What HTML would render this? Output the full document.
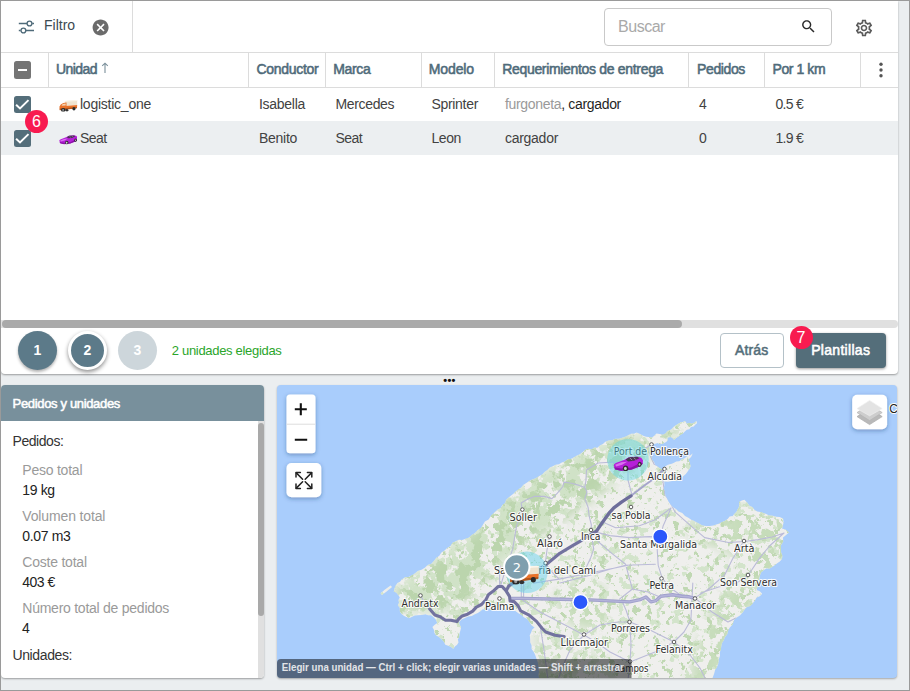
<!DOCTYPE html>
<html lang="es"><head><meta charset="utf-8"><title>Unidades</title>
<style>
*{box-sizing:border-box;margin:0;padding:0}
html,body{width:910px;height:691px;overflow:hidden}
body{position:relative;background:#ebeef0;font-family:"Liberation Sans",sans-serif;font-size:14px;color:#424242}
.abs{position:absolute}
#frame{position:absolute;left:0;top:0;width:910px;height:691px;border:1px solid #9a9a9a;border-top-width:1px;pointer-events:none;z-index:50}
#top{position:absolute;left:1px;top:1px;width:896.5px;height:373px;background:#fff;border-radius:0 0 4px 4px;box-shadow:0 1px 2px rgba(0,0,0,.35)}
.t{position:absolute;white-space:nowrap;line-height:16px;transform-origin:0 50%}
.h{color:#4f6b7a;-webkit-text-stroke:0.55px currentColor}
.vl{position:absolute;width:1px;background:#dcdcdc}
.hl{position:absolute;height:1px;background:#dcdcdc}
.cb{position:absolute;width:17px;height:17px;border-radius:2.5px;background:#546e7a}
.badge{position:absolute;width:23px;height:23px;border-radius:50%;background:#f81b50;color:#fff;font-size:16px;line-height:23.5px;text-align:center}
.step{position:absolute;border-radius:50%;background:#5c7a89;color:#fff;font-weight:bold;font-size:14px;text-align:center}
</style></head><body>
<svg width="0" height="0" style="position:absolute"><defs>
<symbol id="icar" viewBox="0 0 30 15"><path d="M0.5 9.2C0.6 7.6 3 6.6 6 5.6L12 3.2L16 0.9L24 0.3L28 1.5L29.8 4L29.5 7.6L27 10L18 13.6L8 14.6L2 13.2Z" fill="#b51fd8"/><path d="M0.8 11L8 12.4L18 11.4L28 6.4L29.6 7.4L27 10L18 13.6L8 14.6L2 13.2Z" fill="#8912a6"/><path d="M12.3 3.4L16 1.1L24 0.6L26.2 2L21 4.6L15 5.2Z" fill="#4b3654"/><path d="M16.4 1.6L19 3.9M20.5 1.2L22.5 3.4" stroke="#b9a5c2" stroke-width=".7" fill="none"/><path d="M2 8.6L8 6.1L14 5.6L9 8.6L3 10.2Z" fill="#d873ee"/><ellipse cx="12.4" cy="12.1" rx="2.7" ry="2.9" fill="#2e2e2e"/><ellipse cx="12.2" cy="12.2" rx="1.4" ry="1.6" fill="#cfcfcf"/><ellipse cx="26.4" cy="8.1" rx="1.9" ry="2.5" fill="#2e2e2e"/><ellipse cx="26.3" cy="8.2" rx=".9" ry="1.2" fill="#c4c4c4"/></symbol>
<symbol id="itruck" viewBox="0 0 19 12"><path d="M6 0.9L18.6 0L18.6 5.2L6 6.2Z" fill="#efe4d0"/><path d="M6 0.9L18.6 0L18.6 1L6 1.9Z" fill="#fbf5ea"/><path d="M6 6.1L18.6 5.1L18.3 8.2L6 9.6Z" fill="#e9732a"/><path d="M0.4 6.8L1.8 4.6L4.4 3L7.6 2.6L7.6 9.8L0.8 10.2Z" fill="#e9732a"/><path d="M2.6 5.9L3.4 4.4L5 3.7L6.8 3.5L6.8 5.5Z" fill="#f6d3b0"/><path d="M0.6 8.6L7.6 8.2L18.3 7.2L18.2 8.4L6 10L0.8 10.4Z" fill="#b4551a"/><ellipse cx="4.3" cy="10.1" rx="2.3" ry="1.9" fill="#2a2a2a"/><ellipse cx="4.2" cy="10.1" rx="1" ry=".9" fill="#9a9a9a"/><ellipse cx="15.2" cy="8.9" rx="1.6" ry="1.7" fill="#2a2a2a"/><ellipse cx="8" cy="10.4" rx="1.5" ry="1.3" fill="#333"/></symbol>
</defs></svg>
<div id="top">
  <!-- toolbar -->
  <svg class="abs" style="left:17px;top:18.3px" width="17" height="16" viewBox="0 0 17 16"><g fill="none" stroke="#4f6b7a" stroke-width="1.35"><path d="M0.8 4.5H9M14.2 4.5H16M0.8 11.5H2.6M8 11.5H16"/><circle cx="11.5" cy="4.5" r="2.4"/><circle cx="5.4" cy="11.5" r="2.4"/></g></svg>
  <div class="t" style="left:43px;top:16px;color:#3c4a52">Filtro</div>
  <svg class="abs" style="left:90px;top:16.9px" width="19.2" height="19.2" viewBox="0 0 24 24"><circle cx="12" cy="12" r="8" fill="#fff"/><path fill="#6b6b6b" d="M12 2C6.47 2 2 6.47 2 12s4.470 10 10 10 10-4.470 10-10S17.530 2 12 2zm5 13.590L15.590 17 12 13.410 8.410 17 7 15.590 10.590 12 7 8.410 8.410 7 12 10.590 15.590 7 17 8.410 13.410 12 17 15.590z"/></svg>
  <div class="vl" style="left:131px;top:0;height:51px"></div>
  <div class="abs" style="left:603px;top:7px;width:228px;height:38px;border:1px solid #c9c9c9;border-radius:4px"></div>
  <div class="t" id="bus" style="left:617.0px;top:17px;font-size:16px;line-height:18px;color:#a9a9a9;letter-spacing:-0.47px">Buscar</div>
  <svg class="abs" style="left:799.2px;top:17.4px" width="17" height="17" viewBox="0 0 24 24"><path fill="#2a2a2a" d="M15.5 14h-.79l-.28-.27C15.41 12.59 16 11.11 16 9.5 16 5.91 13.09 3 9.5 3S3 5.91 3 9.5 5.91 16 9.5 16c1.61 0 3.09-.59 4.23-1.57l.27.28v.79l5 4.99L20.49 19l-4.99-5zm-6 0C7.01 14 5 11.99 5 9.5S7.01 5 9.5 5 14 7.01 14 9.5 11.99 14 9.5 14z"/></svg>
  <svg class="abs" style="left:853.4px;top:16.5px" width="20" height="20" viewBox="0 0 24 24"><path fill="#5a5a5a" d="M19.43 12.98c.04-.32.07-.64.07-.98 0-.34-.03-.66-.07-.98l2.11-1.65c.19-.15.24-.42.12-.64l-2-3.46c-.09-.16-.26-.25-.44-.25-.06 0-.12.01-.17.03l-2.49 1c-.52-.4-1.08-.73-1.69-.98l-.38-2.65C14.46 2.18 14.25 2 14 2h-4c-.25 0-.46.18-.49.42l-.38 2.65c-.61.25-1.17.59-1.69.98l-2.49-1c-.06-.02-.12-.03-.18-.03-.17 0-.34.09-.43.25l-2 3.46c-.13.22-.07.49.12.64l2.11 1.65c-.04.32-.07.65-.07.98 0 .33.03.66.07.98l-2.11 1.65c-.19.15-.24.42-.12.64l2 3.46c.09.16.26.25.44.25.06 0 .12-.01.17-.03l2.49-1c.52.4 1.08.73 1.69.98l.38 2.65c.03.24.24.42.49.42h4c.25 0 .46-.18.49-.42l.38-2.65c.61-.25 1.17-.59 1.69-.98l2.49 1c.06.02.12.03.18.03.17 0 .34-.09.43-.25l2-3.46c.12-.22.07-.49-.12-.64l-2.11-1.65zm-1.98-1.71c.04.31.05.52.05.73 0 .21-.02.43-.05.73l-.14 1.13.89.7 1.08.84-.7 1.21-1.27-.51-1.04-.42-.9.68c-.43.32-.84.56-1.25.73l-1.06.43-.16 1.13-.2 1.35h-1.4l-.19-1.35-.16-1.13-1.06-.43c-.43-.18-.83-.41-1.23-.71l-.91-.7-1.06.43-1.27.51-.7-1.21 1.08-.84.89-.7-.14-1.13c-.03-.31-.05-.54-.05-.74s.02-.43.05-.73l.14-1.13-.89-.7-1.08-.84.7-1.21 1.27.51 1.04.42.9-.68c.43-.32.84-.56 1.25-.73l1.06-.43.16-1.13.2-1.35h1.39l.19 1.35.16 1.13 1.06.43c.43.18.83.41 1.23.71l.91.7 1.06-.43 1.27-.51.7 1.21-1.07.85-.89.7.14 1.13zM12 8c-2.21 0-4 1.79-4 4s1.79 4 4 4 4-1.79 4-4-1.79-4-4-4zm0 6c-1.1 0-2-.9-2-2s.9-2 2-2 2 .9 2 2-.9 2-2 2z"/></svg>
  <div class="hl" style="left:0;top:51px;width:897px"></div>
  <!-- table header -->
  <div class="abs" style="left:13px;top:60px;width:17px;height:18px;border-radius:2.5px;background:#757575"></div>
  <div class="abs" style="left:17px;top:68px;width:9px;height:2px;background:#fff"></div>
  <div class="vl" style="left:47px;top:51px;height:35px"></div>
  <div class="vl" style="left:247px;top:51px;height:35px"></div>
  <div class="vl" style="left:324px;top:51px;height:35px"></div>
  <div class="vl" style="left:420px;top:51px;height:35px"></div>
  <div class="vl" style="left:493px;top:51px;height:35px"></div>
  <div class="vl" style="left:687px;top:51px;height:35px"></div>
  <div class="vl" style="left:763px;top:51px;height:35px"></div>
  <div class="vl" style="left:859px;top:51px;height:35px"></div>
  <div class="hl" style="left:0;top:86px;width:897px"></div>
  <div class="t h" id="h1" style="left:55.0px;top:60px;letter-spacing:-0.56px">Unidad</div>
  <svg class="abs" style="left:100.2px;top:61px" width="8" height="12" viewBox="0 0 8 12"><path d="M4 1.2V11M1.2 3.8L4 1.2L6.8 3.8" fill="none" stroke="#7b909b" stroke-width="1.1"/></svg>
  <div class="t h" id="h2" style="left:255.4px;top:60px;letter-spacing:-0.29px">Conductor</div>
  <div class="t h" id="h3" style="left:332.2px;top:60px;letter-spacing:-0.32px">Marca</div>
  <div class="t h" id="h4" style="left:427.8px;top:60px;letter-spacing:-0.12px">Modelo</div>
  <div class="t h" id="h5" style="left:501.2px;top:60px;letter-spacing:-0.32px">Requerimientos de entrega</div>
  <div class="t h" id="h6" style="left:696.0px;top:60px;letter-spacing:-0.37px">Pedidos</div>
  <div class="t h" id="h7" style="left:771.6px;top:60px;letter-spacing:-0.43px">Por 1 km</div>
  <svg class="abs" style="left:877px;top:60px" width="6" height="18" viewBox="0 0 6 18"><g fill="#555"><circle cx="3" cy="3.2" r="1.7"/><circle cx="3" cy="9" r="1.7"/><circle cx="3" cy="14.8" r="1.7"/></g></svg>
  <!-- rows -->
  <div class="abs" style="left:0;top:120px;width:897px;height:34px;background:#eceff1"></div>
  <div class="cb" style="left:12.8px;top:95.3px"></div>
  <div class="cb" style="left:12.8px;top:129.1px"></div>
  <svg class="abs" style="left:12.8px;top:95.3px" width="17" height="17" viewBox="0 0 17 17"><path d="M2.1 8.7L6 12.4L14.5 4.1" fill="none" stroke="#fff" stroke-width="2"/></svg>
  <svg class="abs" style="left:12.8px;top:129.1px" width="17" height="17" viewBox="0 0 17 17"><path d="M2.1 8.7L6 12.4L14.5 4.1" fill="none" stroke="#fff" stroke-width="2"/></svg>
  <svg class="abs" style="left:58px;top:99px" width="18.7" height="11.8"><use href="#itruck"/></svg>
  <svg class="abs" style="left:57.7px;top:134px" width="18.8" height="9.6"><use href="#icar"/></svg>
  <div class="badge" style="left:24px;top:108.9px">6</div>
  <div class="t" id="r1a" style="left:79.0px;top:95px;letter-spacing:-0.24px">logistic_one</div>
  <div class="t" id="r1b" style="left:258.0px;top:95px;letter-spacing:-0.28px">Isabella</div>
  <div class="t" id="r1c" style="left:334.5px;top:95px;letter-spacing:-0.35px">Mercedes</div>
  <div class="t" id="r1d" style="left:430.4px;top:95px;letter-spacing:-0.30px">Sprinter</div>
  <div class="t" id="r1e" style="left:504.0px;top:95px;letter-spacing:-0.33px"><span style="color:#9a9a9a">furgoneta</span><span style="color:#1f1f1f">, cargador</span></div>
  <div class="t" id="r1f" style="left:698px;top:95px">4</div>
  <div class="t" id="r1g" style="left:774.4px;top:95px;letter-spacing:-0.71px">0.5 €</div>
  <div class="t" id="r2a" style="left:79.0px;top:129px;letter-spacing:-0.58px">Seat</div>
  <div class="t" id="r2b" style="left:258.0px;top:129px;letter-spacing:-0.28px">Benito</div>
  <div class="t" id="r2c" style="left:334.5px;top:129px;letter-spacing:-0.58px">Seat</div>
  <div class="t" id="r2d" style="left:430.4px;top:129px;letter-spacing:-0.39px">Leon</div>
  <div class="t" id="r2e" style="left:504.0px;top:129px;letter-spacing:-0.28px">cargador</div>
  <div class="t" id="r2f" style="left:698px;top:129px">0</div>
  <div class="t" id="r2g" style="left:774.4px;top:129px;letter-spacing:-0.71px">1.9 €</div>
  <!-- hscroll -->
  <div class="abs" style="left:0;top:319px;width:897px;height:8px;background:#e0e0e0;border-radius:0 4px 4px 0"></div>
  <div class="abs" style="left:1px;top:319px;width:680px;height:7.5px;background:#aaa;border-radius:4px"></div>
  <!-- wizard -->
  <div class="step" style="left:17px;top:330px;width:39px;height:39px;line-height:39px;box-shadow:0 2px 3px rgba(0,0,0,.3)">1</div>
  <div class="step" style="left:67px;top:330px;width:39px;height:39px;line-height:33px;border:3px solid #fff;box-shadow:0 2px 4px rgba(0,0,0,.45)">2</div>
  <div class="step" style="left:117px;top:330px;width:39px;height:39px;line-height:39px;background:#cdd6db">3</div>
  <div class="t" id="sel" style="left:170.8px;top:342px;font-size:13px;color:#2aa52a;letter-spacing:-0.31px">2 unidades elegidas</div>
  <div class="abs" style="left:719px;top:332px;width:64px;height:35px;border:1px solid #b4c1c8;border-radius:4px"></div>
  <div class="t h" id="b1" style="left:734.0px;top:341px;color:#546e7a;letter-spacing:0.16px">Atrás</div>
  <div class="abs" style="left:795px;top:332px;width:90px;height:35px;border-radius:4px;background:#546e7a;box-shadow:0 1px 3px rgba(0,0,0,.4)"></div>
  <div class="t h" id="b2" style="left:810.2px;top:341px;color:#fff;letter-spacing:0.30px">Plantillas</div>
  <div class="badge" style="left:788.5px;top:324.5px">7</div>
</div>
<div class="t" style="left:443.3px;top:371.7px;font-size:11px;font-weight:bold;color:#111;letter-spacing:0.25px;text-shadow:0 0 2px #fff">•••</div>
<!-- left panel -->
<div class="abs" id="lp" style="left:1px;top:385px;width:262.6px;height:292.6px;background:#fff;border-radius:4px;box-shadow:0 1px 2px rgba(0,0,0,.35);overflow:hidden">
  <div class="abs" style="left:0;top:0;width:263px;height:36px;background:#78909c"></div>
  <div class="t" id="lph" style="left:11.6px;top:10.6px;font-size:13px;color:#fff;-webkit-text-stroke:0.5px #fff;letter-spacing:-0.34px">Pedidos y unidades</div>
  <div class="abs" style="left:257px;top:36px;width:6px;height:257px;background:#e0e0e0"></div>
  <div class="abs" style="left:257px;top:38px;width:5.8px;height:193px;background:#a9a9a9;border-radius:3px"></div>
  <div class="t" id="l0" style="left:11.5px;top:48px;color:#333;letter-spacing:-0.44px">Pedidos:</div>
  <div class="t g" id="l1" style="left:21.3px;top:77px;color:#9a9a9a;letter-spacing:-0.23px">Peso total</div>
  <div class="t" id="l2" style="left:21.3px;top:97px;color:#222;letter-spacing:-0.35px">19 kg</div>
  <div class="t g" id="l3" style="left:21.3px;top:123px;color:#9a9a9a;letter-spacing:-0.14px">Volumen total</div>
  <div class="t" id="l4" style="left:21.3px;top:143px;color:#222;letter-spacing:-0.33px">0.07 m3</div>
  <div class="t g" id="l5" style="left:21.3px;top:169px;color:#9a9a9a;letter-spacing:-0.22px">Coste total</div>
  <div class="t" id="l6" style="left:21.3px;top:189px;color:#222;letter-spacing:-0.51px">403 €</div>
  <div class="t g" id="l7" style="left:21.3px;top:215px;color:#9a9a9a;letter-spacing:-0.25px">Número total de pedidos</div>
  <div class="t" id="l8" style="left:21px;top:235px;color:#222">4</div>
  <div class="t" id="l9" style="left:11.5px;top:262px;color:#333;letter-spacing:-0.39px">Unidades:</div>
</div>
<!-- map -->
<div class="abs" id="map" style="left:277px;top:385px;width:619.6px;height:292.5px;background:#a9cdfc;border-radius:4px;overflow:hidden;box-shadow:0 1px 2px rgba(0,0,0,.3)">
<svg class="abs" style="left:0;top:0" width="620" height="293" viewBox="277 385 620 293">
<defs><clipPath id="landc"><path d="M393.8 591.4 L394.5 588.3 L395.8 585.5 L397.4 583.1 L400.0 581.8 L401.8 579.6 L404.8 577.6 L408.4 577.0 L411.6 575.6 L414.8 573.4 L417.8 571.0 L421.5 569.7 L424.8 567.7 L427.7 565.0 L431.4 563.7 L433.9 561.0 L436.1 557.9 L439.3 555.8 L441.4 552.6 L444.5 550.4 L447.2 547.9 L450.5 546.1 L452.7 542.8 L456.1 541.0 L459.0 539.8 L462.1 539.9 L465.0 539.0 L468.7 537.7 L471.7 535.1 L475.0 533.0 L477.5 530.2 L480.8 528.3 L482.8 525.0 L484.9 521.5 L488.6 519.5 L490.8 516.1 L493.0 513.8 L495.3 511.7 L497.7 509.6 L500.6 508.2 L502.3 505.3 L505.1 503.1 L506.1 499.8 L508.6 497.4 L511.1 495.5 L513.7 493.6 L515.8 491.2 L518.4 489.4 L521.2 487.5 L523.5 484.8 L526.3 482.9 L529.2 481.1 L532.3 479.6 L535.7 478.2 L538.8 476.2 L542.2 474.6 L544.5 472.0 L547.4 470.0 L549.9 467.5 L552.8 466.2 L555.7 464.7 L559.0 464.2 L561.8 462.5 L564.9 461.6 L567.5 459.6 L570.7 458.9 L573.6 457.6 L576.6 455.7 L579.9 454.2 L582.8 452.0 L585.5 449.7 L588.4 448.8 L591.6 449.6 L594.3 447.5 L597.4 447.7 L599.9 445.6 L602.9 444.1 L605.3 441.8 L608.6 440.4 L612.1 440.3 L615.4 438.7 L619.0 438.8 L622.1 437.8 L625.2 436.7 L628.1 435.2 L631.0 433.8 L634.0 433.8 L636.6 432.5 L640.0 433.9 L643.2 435.8 L646.1 436.7 L649.0 437.1 L652.0 437.5 L654.3 435.7 L656.4 433.6 L659.7 434.1 L663.0 434.7 L665.6 433.3 L667.4 430.9 L671.1 429.4 L674.0 426.5 L677.2 424.5 L680.5 422.6 L682.8 422.1 L684.9 421.0 L687.1 423.7 L689.3 422.9 L691.5 423.7 L694.2 422.7 L696.5 421.0 L697.0 423.2 L695.2 424.7 L693.7 426.5 L691.0 427.1 L689.3 429.2 L686.8 429.8 L684.9 431.4 L682.9 433.4 L680.5 434.7 L678.5 436.5 L676.2 438.0 L674.0 439.7 L672.5 438.1 L670.7 436.9 L667.4 437.5 L667.7 439.9 L666.3 441.9 L664.1 443.1 L661.9 444.1 L659.6 444.1 L657.5 443.0 L654.5 443.9 L651.4 443.5 L651.3 445.8 L649.8 447.4 L649.6 450.7 L650.3 454.0 L651.8 456.6 L652.0 459.5 L654.0 462.0 L655.3 464.9 L657.6 466.4 L659.7 468.2 L661.8 469.2 L664.1 468.8 L665.2 466.4 L667.4 464.9 L669.6 464.3 L671.8 463.8 L674.0 462.8 L676.2 461.6 L679.2 461.2 L681.6 459.5 L684.6 458.3 L687.1 456.2 L690.1 455.4 L692.6 453.4 L691.5 456.2 L690.1 458.1 L688.2 459.5 L689.9 462.7 L690.5 466.6 L689.0 469.4 L687.3 472.1 L685.8 473.9 L684.0 475.4 L682.3 477.0 L681.8 479.2 L678.4 479.0 L675.4 481.0 L672.0 481.0 L668.1 481.8 L664.2 481.4 L664.4 485.0 L663.6 488.6 L664.9 491.8 L665.3 495.2 L667.0 498.5 L668.6 501.8 L670.7 504.7 L673.0 507.3 L676.0 509.1 L678.5 511.6 L682.3 513.1 L685.0 516.0 L688.4 517.8 L691.6 519.9 L694.3 521.0 L696.7 522.5 L699.3 523.7 L702.3 525.6 L705.9 525.9 L709.8 526.0 L713.6 525.4 L716.2 524.5 L718.8 523.7 L721.3 522.6 L724.8 521.0 L727.9 518.8 L729.6 516.5 L732.7 516.0 L734.5 513.8 L736.4 512.0 L737.5 509.7 L738.8 507.2 L739.3 504.6 L739.4 501.8 L741.8 500.6 L744.4 499.8 L747.0 502.6 L749.3 505.7 L752.4 507.1 L754.4 509.8 L757.2 511.6 L760.4 511.9 L763.4 512.9 L766.3 514.1 L769.1 515.6 L772.7 515.8 L776.1 516.8 L779.7 517.1 L783.0 518.6 L783.6 522.0 L783.0 525.3 L782.0 528.5 L785.8 529.8 L788.9 532.4 L786.1 535.1 L783.0 537.4 L783.2 541.5 L781.0 545.2 L781.0 549.2 L781.1 552.5 L782.3 555.7 L782.0 559.1 L779.8 561.4 L777.2 563.3 L774.7 565.2 L772.0 567.0 L769.6 568.6 L766.4 568.4 L764.0 570.0 L761.2 572.2 L759.8 575.5 L759.2 579.2 L758.4 582.8 L757.5 586.4 L756.6 590.0 L759.8 591.2 L762.2 593.7 L759.8 596.2 L756.6 597.5 L754.8 600.7 L752.5 603.6 L750.1 605.9 L746.9 607.1 L744.6 609.6 L742.4 612.7 L739.9 615.5 L736.7 617.5 L734.3 619.5 L733.2 622.4 L732.0 625.3 L729.8 627.4 L728.1 630.6 L727.2 634.3 L724.8 637.2 L723.8 640.2 L722.0 642.9 L721.3 645.9 L720.9 649.1 L719.9 652.3 L720.0 655.8 L718.9 659.0 L718.5 661.7 L718.1 664.4 L716.9 666.9 L715.1 670.0 L714.2 673.5 L713.0 676.8 L712.0 679.3 L712.0 682.0 L540.0 682.0 L539.2 678.5 L538.5 675.1 L539.1 671.4 L538.0 668.0 L538.4 664.9 L537.7 661.9 L536.6 659.0 L535.4 655.5 L533.8 652.1 L531.6 649.1 L531.6 645.6 L530.2 642.3 L530.2 638.7 L529.7 635.3 L531.1 632.5 L532.2 629.6 L534.6 627.4 L531.5 625.2 L529.4 622.1 L527.3 619.1 L524.1 617.5 L521.6 614.9 L518.4 613.2 L515.4 611.1 L511.8 610.6 L508.6 609.2 L505.3 608.4 L502.0 608.3 L498.7 609.2 L494.9 607.9 L490.8 608.2 L488.2 608.8 L485.5 609.4 L482.8 609.2 L480.4 611.3 L477.8 613.0 L474.9 614.2 L471.8 616.0 L468.2 616.6 L465.0 618.1 L461.6 619.5 L459.1 622.1 L459.5 624.8 L461.1 627.0 L460.5 630.3 L459.5 633.5 L459.1 636.9 L457.9 639.4 L458.5 642.4 L457.1 644.8 L454.9 646.6 L453.2 648.8 L450.9 646.8 L448.2 645.7 L445.3 644.8 L443.7 641.6 L441.3 638.9 L439.0 637.0 L436.3 635.4 L434.4 633.0 L433.9 629.8 L432.4 627.0 L434.7 624.8 L437.4 623.1 L435.9 619.8 L433.4 617.1 L431.1 615.3 L428.1 615.3 L425.5 614.2 L421.6 614.9 L417.6 615.2 L414.7 615.4 L412.2 616.8 L409.7 618.1 L406.8 617.3 L404.1 616.1 L401.8 614.2 L399.9 611.5 L399.8 608.0 L397.8 605.3 L399.0 602.8 L398.5 599.9 L399.8 597.4 L398.2 595.0 L396.4 592.8Z"/><path d="M380.6 593.2L385 589.6L390.6 585.6L392 587L386.6 591.4L382 595Z"/></clipPath>
<filter id="nA" x="0" y="0" width="100%" height="100%" color-interpolation-filters="sRGB"><feTurbulence type="fractalNoise" baseFrequency="0.11" numOctaves="4" seed="3"/><feColorMatrix values="0 0 0 0 0.827  0 0 0 0 0.894  0 0 0 0 0.796  0 -22 0 0 8.75"/></filter>
<filter id="nB" x="0" y="0" width="100%" height="100%" color-interpolation-filters="sRGB"><feTurbulence type="fractalNoise" baseFrequency="0.15" numOctaves="4" seed="8"/><feColorMatrix values="0 0 0 0 0.753  0 0 0 0 0.847  0 0 0 0 0.702  0 -24 0 0 9.15"/></filter>
<filter id="nC" x="0" y="0" width="100%" height="100%" color-interpolation-filters="sRGB"><feTurbulence type="fractalNoise" baseFrequency="0.06" numOctaves="4" seed="5"/><feColorMatrix values="0 0 0 0 0.816  0 0 0 0 0.886  0 0 0 0 0.780  0 -22 0 0 11.5"/></filter>
<filter id="nD" x="0" y="0" width="100%" height="100%" color-interpolation-filters="sRGB"><feTurbulence type="fractalNoise" baseFrequency="0.085" numOctaves="4" seed="12"/><feColorMatrix values="0 0 0 0 0.733  0 0 0 0 0.835  0 0 0 0 0.678  0 -24 0 0 11.4"/></filter>
<filter id="bl"><feGaussianBlur stdDeviation="6"/></filter><mask id="mm"><path d="M395.0 590.0 L405.0 578.0 L425.0 566.0 L445.0 548.0 L470.0 534.0 L490.0 514.0 L510.0 495.0 L535.0 477.0 L560.0 462.0 L590.0 448.0 L620.0 438.0 L650.0 434.0 L690.0 422.0 L672.0 438.0 L650.0 452.0 L640.0 466.0 L620.0 478.0 L600.0 494.0 L580.0 508.0 L560.0 522.0 L540.0 536.0 L520.0 550.0 L500.0 565.0 L480.0 585.0 L465.0 605.0 L445.0 612.0 L420.0 612.0 L400.0 610.0Z" fill="#fff" filter="url(#bl)"/></mask>
<mask id="me"><path d="M735.0 505.0 L790.0 515.0 L790.0 560.0 L765.0 592.0 L745.0 615.0 L728.0 650.0 L718.0 682.0 L688.0 682.0 L698.0 645.0 L712.0 612.0 L728.0 588.0 L742.0 562.0 L722.0 548.0 L700.0 538.0 L686.0 522.0 L715.0 528.0Z" fill="#fff" filter="url(#bl)"/><path d="M535.0 625.0 L560.0 640.0 L590.0 650.0 L620.0 668.0 L620.0 682.0 L535.0 682.0Z" fill="#999" filter="url(#bl)"/><path d="M562.0 586.0 L585.0 580.0 L603.0 588.0 L612.0 612.0 L596.0 630.0 L570.0 624.0 L556.0 604.0Z" fill="#fff" filter="url(#bl)"/><path d="M686.0 515.0 L700.0 524.0 L730.0 520.0 L738.0 535.0 L715.0 545.0 L690.0 535.0Z" fill="#ddd" filter="url(#bl)"/></mask>
<filter id="nE" x="0" y="0" width="100%" height="100%" color-interpolation-filters="sRGB"><feTurbulence type="fractalNoise" baseFrequency="0.10" numOctaves="4" seed="21"/><feColorMatrix values="0 0 0 0 0.776  0 0 0 0 0.863  0 0 0 0 0.729  0 -22 0 0 10.5"/></filter>
</defs>
<g clip-path="url(#landc)"><rect x="277" y="385" width="620" height="293" fill="#efefed"/>
<rect x="277" y="385" width="620" height="293" filter="url(#nA)"/>
<rect x="277" y="385" width="620" height="293" filter="url(#nB)"/>
<g mask="url(#mm)"><rect x="277" y="385" width="620" height="293" filter="url(#nC)"/><rect x="277" y="385" width="620" height="293" filter="url(#nD)"/></g>
<g mask="url(#me)"><rect x="277" y="385" width="620" height="293" filter="url(#nE)"/></g>
<g fill="none" stroke-linejoin="round" stroke-linecap="round">
<path d="M500.8 585.0 L505.7 569.2 L512.6 549.4 L516.6 525.7 L522.5 509.9 M632.0 495.0 L628.0 480.0 L628.0 465.0 M628.0 465.0 L640.0 452.0 L651.0 444.5 M651.0 444.5 L650.0 455.0 L654.0 464.0 L664.0 469.0 M664.0 469.0 L663.0 482.0 L665.0 495.0 L669.0 500.0 L675.0 511.9 L692.8 527.7 L704.7 537.6 L728.4 542.5 L744.3 541.5 L758.1 539.6 L772.0 537.0 L784.0 533.0 M671.0 508.0 L663.2 525.7 L657.2 549.4 L658.2 565.3 L662.2 578.1 M594.0 531.6 L609.8 535.6 L629.6 537.6 L649.3 536.6 L660.0 537.0 M598.0 541.5 L611.8 553.4 L625.6 564.3 L629.6 579.1 L632.5 589.0 L619.7 598.9 M560.0 583.0 L590.0 575.2 L609.8 569.2 L625.6 565.3 L655.3 564.3 M533.4 583.1 L559.1 579.1 L598.7 571.2 L628.3 565.3 M662.2 578.1 L669.1 587.0 L679.0 594.0 L694.8 597.9 M694.8 597.9 L708.7 589.0 L724.5 575.2 L732.4 559.3 L742.3 543.5 M700.8 593.0 L718.6 587.0 L736.4 583.1 L748.2 575.2 L760.1 557.4 L770.0 545.5 L784.0 533.0 M601.9 521.8 L615.7 527.7 L639.4 525.7 L655.3 519.8 L671.0 508.0 M590.8 529.7 L593.7 549.4 L590.8 557.4 L585.0 570.0 M692.8 583.1 L690.9 620.0 L684.0 632.0 L674.0 642.0 M694.8 597.9 L712.0 612.0 L728.0 622.0 L736.0 618.0 M674.0 642.0 L655.0 652.0 L640.0 658.0 L630.0 662.0 M674.0 642.0 L690.0 655.0 L700.0 668.0 L706.0 680.0 M630.0 662.0 L610.0 652.0 L596.0 642.0 L584.0 635.0 M630.0 622.0 L631.0 645.0 L630.0 662.0 L628.0 680.0 M630.0 622.0 L626.0 610.0 L622.0 601.0 M630.0 622.0 L650.0 630.0 L674.0 642.0 M584.0 635.0 L600.0 625.0 L618.0 622.0 L630.0 622.0 M522.4 509.6 L521.1 503.0 L526.6 499.7 L534.3 496.4 L544.2 496.4 L551.9 498.6 L557.4 493.1 L562.9 486.5 L564.0 482.1 L571.6 483.2 L579.3 485.4 L584.8 487.6 L585.9 481.0 L586.5 470.0 L598.0 463.0 L614.0 462.0 L628.0 465.0 M584.8 487.6 L587.0 492.0 L584.8 498.6 L588.1 507.4 L589.2 516.2 L591.4 525.0 L590.9 529.9 M584.0 635.0 L570.0 650.0 L562.0 668.0 L558.0 680.0 M540.0 625.0 L544.0 650.0 L548.0 680.0 M549.5 536.5 L547.0 550.0 L545.3 563.3 M545.3 563.3 L552.0 572.0 L559.1 579.1 M521.0 599.0 L540.0 612.0 L565.0 625.0 L584.0 635.0 M420.5 595.5 L425.0 603.0 L429.4 609.2 M521.3 598.0 L521.3 583.0 L522.0 576.0 M523.6 598.0 L523.6 584.0 L526.0 577.0 M499.6 586.0 L499.6 575.3 L500.5 566.0 M632.0 589.0 L648.0 592.0 L660.0 597.0" stroke="#bbbbd8" stroke-width="1.1"/>
<path d="M632.0 495.0 L645.0 485.0 L655.0 478.0 L664.0 469.0" stroke="#a5a5cb" stroke-width="2"/>
<path d="M510.8 598.4 L521.5 598.4 L560.0 599.2 L590.0 599.9 L609.8 600.9 L629.6 601.9 L640.0 599.7 L645.9 597.0 L650.9 601.9 L655.8 600.7 L660.8 596.2 L672.6 594.7 L681.5 596.2 L688.5 596.7 L694.8 598.3" stroke="#a0a0cb" stroke-width="3.4"/>
<path d="M510.8 598.4 L521.5 598.4 L560.0 599.2 L590.0 599.9 L609.8 600.9 L629.6 601.9 L640.0 599.7 L645.9 597.0 L650.9 601.9 L655.8 600.7 L660.8 596.2 L672.6 594.7 L681.5 596.2 L688.5 596.7 L694.8 598.3" stroke="#b4b4da" stroke-width="1.4"/>
<path d="M429.7 608.9 L434.9 615.1 L440.2 616.8 L445.5 620.3 L450.8 620.3 L456.9 621.6 L458.7 619.0 L462.2 615.9 L467.5 614.2 L472.7 611.1 L476.3 607.1 L481.5 604.5 L485.9 599.7 L488.6 594.4 L493.0 591.3 L498.2 586.5 L502.2 586.5 L506.2 591.1 L509.5 596.4 L510.1 601.0 L514.1 601.6 L518.0 605.6 L520.7 610.9 L528.6 614.8 L536.5 621.4 L541.8 628.0 L545.7 632.0 L555.0 635.3 L564.2 636.6 M506.2 591.1 L508.8 585.8 L516.0 581.5 L529.4 575.0 L545.3 565.4 L559.8 553.3 L573.0 545.4 L580.9 540.8 L596.7 530.9" stroke="#72729f" stroke-width="3.1"/>
<path d="M596.7 530.9 L602.0 523.0 L608.6 513.7 L613.8 507.8 L621.8 501.9 L631.0 495.9" stroke="#6d6d9b" stroke-width="3.3"/>
</g></g>
<g fill="#fff" stroke="#5a5a5a" stroke-width="1"><circle cx="522.4" cy="509.6" r="1.8"/><circle cx="549.5" cy="536.5" r="1.8"/><circle cx="591.0" cy="530.0" r="1.8"/><circle cx="631.0" cy="507.0" r="1.8"/><circle cx="664.5" cy="469.0" r="1.8"/><circle cx="651.5" cy="444.5" r="1.8"/><circle cx="656.0" cy="535.0" r="1.8"/><circle cx="744.0" cy="541.0" r="1.8"/><circle cx="748.0" cy="575.0" r="1.8"/><circle cx="661.5" cy="578.5" r="1.8"/><circle cx="695.0" cy="598.5" r="1.8"/><circle cx="629.5" cy="622.0" r="1.8"/><circle cx="674.0" cy="642.0" r="1.8"/><circle cx="630.0" cy="661.5" r="1.8"/><circle cx="584.0" cy="634.5" r="1.8"/><circle cx="499.5" cy="598.5" r="1.8"/><circle cx="420.5" cy="595.5" r="1.8"/><circle cx="545.5" cy="563.0" r="1.8"/></g>
<g font-family="DejaVu Sans, Liberation Sans, sans-serif" font-size="10.3" fill="#2e2e2e" stroke="#fff" stroke-width="2.2" stroke-linejoin="round" paint-order="stroke" stroke-opacity=".9">
<text x="613.7" y="454.8" textLength="75.3" lengthAdjust="spacingAndGlyphs">Port de Pollença</text>
<text x="647.5" y="479.8" textLength="34.5" lengthAdjust="spacingAndGlyphs">Alcúdia</text>
<text x="509.5" y="520.6" textLength="27.5" lengthAdjust="spacingAndGlyphs">Sóller</text>
<text x="611.5" y="518.6" textLength="39.0" lengthAdjust="spacingAndGlyphs">sa Pobla</text>
<text x="581.0" y="540.2" textLength="19.5" lengthAdjust="spacingAndGlyphs">Inca</text>
<text x="537.0" y="546.7" textLength="26.0" lengthAdjust="spacingAndGlyphs">Alaró</text>
<text x="620.0" y="547.7" textLength="77.0" lengthAdjust="spacingAndGlyphs">Santa Margalida</text>
<text x="734.0" y="552.2" textLength="20.5" lengthAdjust="spacingAndGlyphs">Artà</text>
<text x="494.0" y="573.7" textLength="102.0" lengthAdjust="spacingAndGlyphs">Santa Maria del Camí</text>
<text x="720.0" y="585.7" textLength="57.0" lengthAdjust="spacingAndGlyphs">Son Servera</text>
<text x="649.5" y="588.7" textLength="24.5" lengthAdjust="spacingAndGlyphs">Petra</text>
<text x="401.5" y="607.2" textLength="37.0" lengthAdjust="spacingAndGlyphs">Andratx</text>
<text x="485.0" y="609.7" textLength="29.5" lengthAdjust="spacingAndGlyphs">Palma</text>
<text x="675.0" y="609.2" textLength="41.0" lengthAdjust="spacingAndGlyphs">Manacor</text>
<text x="611.0" y="632.2" textLength="39.0" lengthAdjust="spacingAndGlyphs">Porreres</text>
<text x="560.5" y="646.2" textLength="47.5" lengthAdjust="spacingAndGlyphs">Llucmajor</text>
<text x="655.5" y="652.7" textLength="37.5" lengthAdjust="spacingAndGlyphs">Felanitx</text>
<text x="614.0" y="671.7" textLength="34.5" lengthAdjust="spacingAndGlyphs">Campos</text>
</g>
<circle cx="628" cy="459.7" r="20.8" fill="#5fd6e6" fill-opacity=".44"/>
<circle cx="526.9" cy="572.3" r="20.7" fill="#5fd2ee" fill-opacity=".46"/>
<svg x="613" y="456.2" width="30.4" height="15"><use href="#icar"/></svg>
<svg x="509" y="565.6" width="30.4" height="19.2"><use href="#itruck"/></svg>
<circle cx="516.8" cy="567" r="12.7" fill="#7f9fae" stroke="#fff" stroke-width="2"/>
<text x="516.8" y="571.6" text-anchor="middle" font-family="DejaVu Sans, sans-serif" font-size="13" fill="#fff">2</text>
<circle cx="660.3" cy="536.7" r="7.6" fill="#2b57fb" stroke="#fff" stroke-width="1.4"/>
<circle cx="580.5" cy="602.2" r="7.6" fill="#2b57fb" stroke="#fff" stroke-width="1.4"/>
<defs><filter id="sh" x="-30%" y="-30%" width="160%" height="170%"><feDropShadow dx="0" dy="1.5" stdDeviation="2" flood-color="#1a3a6a" flood-opacity=".4"/></filter></defs>
<g filter="url(#sh)"><rect x="286.5" y="394.5" width="29" height="58.7" rx="3.5" fill="#fff"/><rect x="286.5" y="463.1" width="34.8" height="34.2" rx="5" fill="#fff"/><rect x="852.2" y="394.8" width="34.9" height="34.4" rx="5" fill="#fff"/></g>
<path d="M286.5 424.2H315.5" stroke="#ddd" stroke-width="1"/>
<path d="M294.8 409.3H306.8M300.8 403.3V415.3M294.8 439.7H307.2" stroke="#111" stroke-width="2.1" fill="none"/>
<g stroke="#222" stroke-width="1.5" fill="none" stroke-linecap="round" stroke-linejoin="round"><path d="M302.6 479.2L296.3 472.9M305.2 479.2L311.5 472.9M302.6 481.8L296.3 488.1M305.2 481.8L311.5 488.1"/><path d="M296 477V472.6H300.4M307.4 472.6H311.8V477M296 484V488.4H300.4M307.4 488.4H311.8V484"/></g>
<g stroke-width=".7"><path d="M869.6 408.4L882.2 416.6L869.6 424.6L857 416.6Z" fill="#b9b9b9" stroke="#a8a8a8"/><path d="M869.6 404.4L882.2 412.6L869.6 420.6L857 412.6Z" fill="#cdcdcd" stroke="#b5b5b5"/><path d="M869.6 400.4L882.2 408.6L869.6 415.8L857 408.6Z" fill="#e3e3e3" stroke="#efefef"/></g>
<text x="889.3" y="412.6" font-family="Liberation Sans, sans-serif" font-size="12" fill="#222" stroke="#fff" stroke-width="2" paint-order="stroke">C</text>
<path d="M277 663q0-4 4-4h346.5q4 0 4 4v19H277Z" fill="#05080c" fill-opacity=".52"/>
<text x="281.8" y="671.3" textLength="342" lengthAdjust="spacingAndGlyphs" font-family="Liberation Sans, sans-serif" font-weight="bold" font-size="10.5" fill="#e2e4e8">Elegir una unidad — Ctrl + click; elegir varias unidades — Shift + arrastrar</text>
</svg>
</div>
<div id="frame"></div>
</body></html>
